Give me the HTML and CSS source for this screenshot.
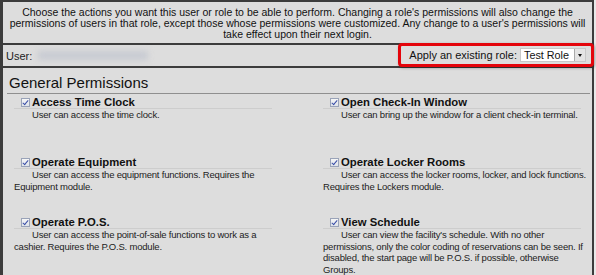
FILE: index.html
```html
<!DOCTYPE html>
<html lang="en">
<head>
  <meta charset="UTF-8" />
  <title>User Permissions</title>
  <link rel="stylesheet" href="styles.css">
</head>
<body>
  <div class="frame">
    <div class="intro">
      Choose the actions you want this user or role to be able to perform. Changing a role's permissions will also change the
      permissions of users in that role, except those whose permissions were customized. Any change to a user's permissions will
      take effect upon their next login.
    </div>

    <div class="user-bar">
      <div class="user">User: <span class="user-name"></span></div>
      <div class="role-pick">
        Apply an existing role:
        <span class="select">Test Role<span class="select-btn"></span></span>
      </div>
    </div>

    <div class="perms">
      <h2>General Permissions</h2>
      <div class="perm-grid">
        <div class="perm">
          <div class="perm-title"><span class="check"></span>Access Time Clock</div>
          <p class="perm-desc">User can access the time clock.</p>
        </div>
        <div class="perm">
          <div class="perm-title"><span class="check"></span>Open Check-In Window</div>
          <p class="perm-desc">User can bring up the window for a client check-in terminal.</p>
        </div>
        <div class="perm">
          <div class="perm-title"><span class="check"></span>Operate Equipment</div>
          <p class="perm-desc">User can access the equipment functions. Requires the Equipment module.</p>
        </div>
        <div class="perm">
          <div class="perm-title"><span class="check"></span>Operate Locker Rooms</div>
          <p class="perm-desc">User can access the locker rooms, locker, and lock functions. Requires the Lockers module.</p>
        </div>
        <div class="perm">
          <div class="perm-title"><span class="check"></span>Operate P.O.S.</div>
          <p class="perm-desc">User can access the point-of-sale functions to work as a cashier. Requires the P.O.S. module.</p>
        </div>
        <div class="perm">
          <div class="perm-title"><span class="check"></span>View Schedule</div>
          <p class="perm-desc">User can view the facility's schedule. With no other permissions, only the color coding of reservations can be seen. If disabled, the start page will be P.O.S. if possible, otherwise Groups.</p>
        </div>
      </div>
    </div>
  </div>
</body>
</html>
```

FILE: styles.css
```css
* { box-sizing: border-box; }

body {
  margin: 0;
  background: #e9e9e9;
  font-family: 'Liberation Sans', Arial, sans-serif;
  color: #111;
  overflow: hidden;
}

.frame {
  width: 594px;
  height: 275px;
  background: #dddddd;
  border-left: 3px solid #3c3c3c;
  border-top: 2px solid #3c3c3c;
  border-right: 2px solid #3c3c3c;
}

.intro {
  font-size: 10.5px;
  line-height: 11px;
  text-align: center;
  padding: 5px 4px 4px;
  height: 43px;
  border-bottom: 2px solid #3c3c3c;
}

.user-bar {
  height: 23px;
  display: flex;
  align-items: center;
  justify-content: space-between;
  border-bottom: 2px solid #3c3c3c;
  font-size: 11px;
}

.user {
  padding-left: 3px;
  display: flex;
  align-items: center;
  color: #222;
}

.user-name {
  display: inline-block;
  width: 110px;
  height: 9px;
  margin-left: 6px;
  background: #c7cad2;
  filter: blur(3px);
}

.role-pick {
  height: 24px;
  margin: -1px -2px 0 0;
  padding: 0 5px 0 8px;
  display: flex;
  align-items: center;
  gap: 3px;
  border: 3px solid #e4040b;
  border-radius: 4px;
  box-shadow: 1px 1px 3px rgba(0, 0, 0, 0.35);
  font-size: 11px;
}

.select {
  display: flex;
  align-items: center;
  height: 14px;
  padding-left: 3px;
  background: #ffffff;
  border: 1px solid #c8c8c8;
  font-size: 10.8px;
}

.select-btn {
  width: 11px;
  height: 12px;
  margin-left: 5px;
  background: #e4e4e4;
  border-left: 1px solid #aaa;
  position: relative;
}

.select-btn::after {
  content: '';
  position: absolute;
  left: 3px;
  top: 5px;
  border-left: 2.5px solid transparent;
  border-right: 2.5px solid transparent;
  border-top: 3px solid #111;
}

.perms {
  padding: 6px 2px 0 4px;
}

h2 {
  margin: 0 0 2px;
  padding: 0 0 1px 2px;
  font-size: 15px;
  font-weight: normal;
  line-height: 18px;
  border-bottom: 1px solid #8f8f8f;
  color: #111;
}

.perm-grid {
  display: grid;
  grid-template-columns: 258px 258px;
  column-gap: 51px;
  padding-left: 7px;
}

.perm {
  height: 60px;
}

.perm-title {
  display: flex;
  align-items: center;
  padding-left: 7px;
  font-size: 11.3px;
  font-weight: bold;
  line-height: 12px;
  border-bottom: 1px solid #cdcdcd;
}

.check {
  width: 9px;
  height: 9px;
  margin-right: 2px;
  border: 1px solid #9aa3b8;
  background: linear-gradient(#f6f6f6, #dfe3ea);
  position: relative;
}

.check::after {
  content: '';
  position: absolute;
  left: 2px;
  top: 0;
  width: 2px;
  height: 5px;
  border-right: 1.5px solid #3b4fa8;
  border-bottom: 1.5px solid #3b4fa8;
  transform: rotate(40deg);
}

.perm-desc {
  margin: 0 -5px 0 0;
  font-size: 9.5px;
  letter-spacing: -0.2px;
  line-height: 11.5px;
  text-indent: 18px;
  color: #222;
}
```
